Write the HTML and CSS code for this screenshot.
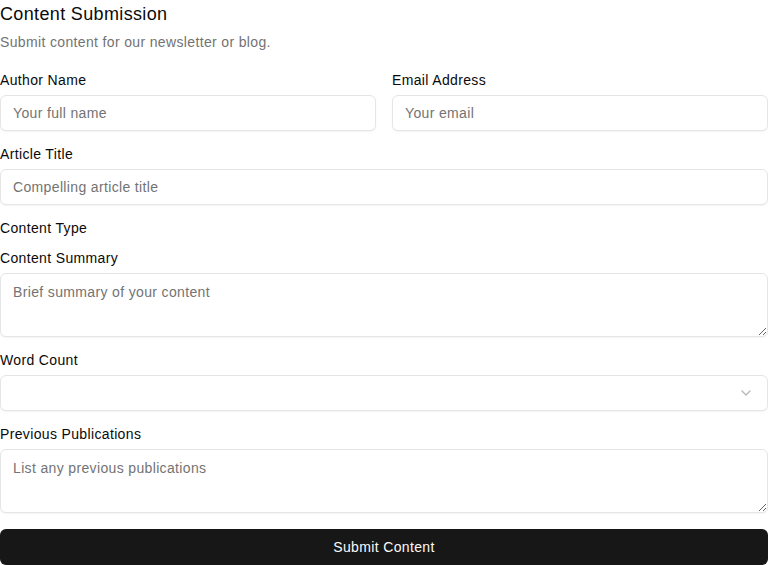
FILE: index.html
```html
<!DOCTYPE html>
<html lang="en">
<head>
<meta charset="utf-8">
<title>Content Submission</title>
<link rel="stylesheet" href="styles.css">
</head>
<body>
<main class="page">
  <header class="header">
    <h1 class="title">Content Submission</h1>
    <p class="subtitle">Submit content for our newsletter or blog.</p>
  </header>
  <form class="form">
    <div class="row">
      <div class="field">
        <label class="label" for="author">Author Name</label>
        <input class="input" id="author" type="text" placeholder="Your full name">
      </div>
      <div class="field">
        <label class="label" for="email">Email Address</label>
        <input class="input" id="email" type="email" placeholder="Your email">
      </div>
    </div>
    <div class="field">
      <label class="label" for="title">Article Title</label>
      <input class="input" id="title" type="text" placeholder="Compelling article title">
    </div>
    <div class="field">
      <label class="label">Content Type</label>
    </div>
    <div class="field">
      <label class="label" for="summary">Content Summary</label>
      <textarea class="textarea" id="summary" placeholder="Brief summary of your content"></textarea>
    </div>
    <div class="field">
      <label class="label">Word Count</label>
      <div class="select" role="combobox">
        <span class="select-value"></span>
        <svg class="chevron" width="16" height="16" viewBox="0 0 24 24" fill="none" stroke="currentColor" stroke-width="2" stroke-linecap="round" stroke-linejoin="round"><path d="m6 9 6 6 6-6"/></svg>
      </div>
    </div>
    <div class="field">
      <label class="label" for="pubs">Previous Publications</label>
      <textarea class="textarea" id="pubs" placeholder="List any previous publications"></textarea>
    </div>
    <button class="button" type="button">Submit Content</button>
  </form>
</main>
</body>
</html>
```

FILE: styles.css
```css
* { box-sizing: border-box; }
html, body { margin: 0; padding: 0; background: #ffffff; }
body {
  font-family: "Liberation Sans", Arial, sans-serif;
  color: #0a0a0a;
  width: 768px;
  letter-spacing: 0.022em;
}
.page { display: flex; flex-direction: column; }
.header { display: flex; flex-direction: column; gap: 4px; margin-bottom: 21px; }
.title { margin: 0; font-size: 18px; line-height: 28px; font-weight: 400; color: #0a0a0a; }
.subtitle { margin: 0; font-size: 14px; line-height: 20px; color: #737373; }
.form { display: flex; flex-direction: column; gap: 16px; }
.row { display: grid; grid-template-columns: 1fr 1fr; gap: 16px; }
.field { display: flex; flex-direction: column; gap: 8px; }
.label { font-size: 14px; line-height: 14px; font-weight: 400; color: #0a0a0a; }
.input, .textarea, .select {
  width: 100%;
  border: 1px solid #e5e5e5;
  border-radius: 6px;
  background: #fff;
  font-family: inherit;
  font-size: 14px;
  letter-spacing: inherit;
  color: #0a0a0a;
  box-shadow: 0 1px 2px rgba(0,0,0,0.05);
  outline: none;
}
.input { height: 36px; padding: 0 12px; line-height: 20px; }
.textarea { height: 64px; padding: 8px 12px; line-height: 20px; resize: vertical; display: block; }
.input::placeholder, .textarea::placeholder { color: #737373; opacity: 1; }
.select {
  height: 36px;
  padding: 0 13px 0 12px;
  display: flex;
  align-items: center;
  justify-content: space-between;
}
.chevron { color: #737373; opacity: 0.5; flex: none; }
.button {
  height: 36px;
  width: 100%;
  border: none;
  border-radius: 6px;
  background: #171717;
  color: #fafafa;
  font-family: inherit;
  font-size: 14px;
  font-weight: 500;
  letter-spacing: inherit;
  line-height: 20px;
}
```
